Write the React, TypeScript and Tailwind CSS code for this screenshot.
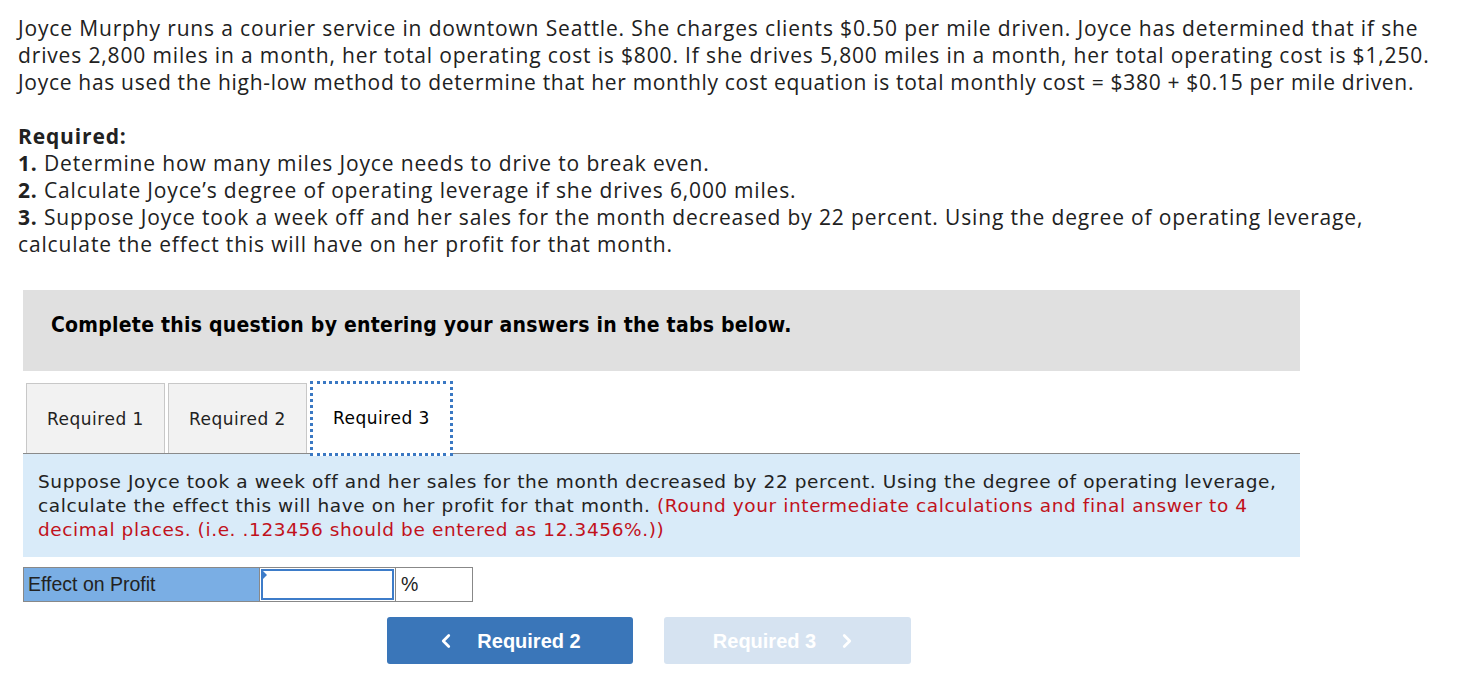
import { ChevronLeft, ChevronRight } from 'lucide-react'

const proxima = "font-['Open_Sans',_'Liberation_Sans',_sans-serif]"
const verdana = "font-['DejaVu_Sans',_'Liberation_Sans',_sans-serif]"
const arial = "font-['Liberation_Sans',_Arial,_sans-serif]"

export default function App() {
  return (
    <div className="min-h-screen bg-white text-[#212121]">
      <div className={`${proxima} whitespace-nowrap pl-[18px] pt-[15px] text-[21px] leading-[27px] tracking-[0.85px]`}>
        <p>
          Joyce Murphy runs a courier service in downtown Seattle. She charges clients $0.50 per mile driven. Joyce has determined that if she
          <br />
          drives 2,800 miles in a month, her total operating cost is $800. If she drives 5,800 miles in a month, her total operating cost is $1,250.
          <br />
          <span className="tracking-[0.7px]">
            Joyce has used the high-low method to determine that her monthly cost equation is total monthly cost = $380 + $0.15 per mile driven.
          </span>
        </p>
        <p className="mt-[27px] font-bold">Required:</p>
        <p>
          <span className="font-bold">1.</span> Determine how many miles Joyce needs to drive to break even.
        </p>
        <p>
          <span className="font-bold">2.</span> Calculate Joyce’s degree of operating leverage if she drives 6,000 miles.
        </p>
        <p>
          <span className="font-bold">3.</span> Suppose Joyce took a week off and her sales for the month decreased by 22 percent. Using the degree of operating leverage,
          <br />
          calculate the effect this will have on her profit for that month.
        </p>
      </div>

      <div className="ml-[23px] mt-[32px] w-[1277px]">
        <div className="flex h-[81px] items-center bg-[#e0e0e0] pb-[10px] pl-[28px]">
          <span className="font-['DejaVu_Sans_Condensed',_'DejaVu_Sans',_sans-serif] text-[21px] font-bold tracking-[0.25px] text-black">
            Complete this question by entering your answers in the tabs below.
          </span>
        </div>

        <div className={`${verdana} mt-[10px] flex items-end gap-[3px] pl-[3px] text-[17px] tracking-[0.5px] text-[#222]`}>
          <div className="flex h-[70px] w-[139px] items-center justify-center border border-b-0 border-[#c8c8c8] bg-[#f2f2f2] pt-[2px]">
            Required 1
          </div>
          <div className="flex h-[70px] w-[139px] items-center justify-center border border-b-0 border-[#c8c8c8] bg-[#f2f2f2] pt-[2px]">
            Required 2
          </div>
          <div className="relative z-10 -mb-[3px] flex h-[75px] w-[143px] items-center justify-center border-[3px] border-dotted border-[#3a78c3] bg-white text-black">
            Required 3
          </div>
        </div>
        <div className="h-px bg-[#8a8a8a]" />

        <div className={`${verdana} whitespace-nowrap bg-[#d9ebf9] px-[15px] pb-[15px] pt-[16px] text-[18.5px] leading-[24px] tracking-[0.6px] text-[#222]`}>
          Suppose Joyce took a week off and her sales for the month decreased by 22 percent. Using the degree of operating leverage,
          <br />
          calculate the effect this will have on her profit for that month.{' '}
          <span className="text-[#c1121c]">
            (Round your intermediate calculations and final answer to 4
            <br />
            decimal places. (i.e. .123456 should be entered as 12.3456%.))
          </span>
        </div>

        <div className={`${arial} mt-[10px] flex h-[35px] w-[450px] border border-[#888] text-[19.5px] text-[#222]`}>
          <div className="flex w-[235px] items-center bg-[#7aaee4] pl-[4px]">Effect on Profit</div>
          <div className="relative w-[136px] border-l border-[#888] p-[1px]">
            <div className="h-full w-full border-2 border-[#3d7cc9] bg-white" />
            <div className="absolute left-[1px] top-[1px] h-0 w-0 border-b-[6px] border-l-[6px] border-t-[6px] border-b-transparent border-l-[#3d7cc9] border-t-transparent" />
          </div>
          <div className="flex flex-1 items-center border-l border-[#888] bg-white pl-[5px]">%</div>
        </div>

        <div className={`${arial} mt-[15px] flex gap-[31px] pl-[364px] text-[20px] font-bold text-white`}>
          <button className="flex h-[47px] w-[246px] items-center justify-center gap-[20px] rounded-[3px] bg-[#3a76b9] pr-[4px]">
            <ChevronLeft size={22} strokeWidth={3} />
            <span>Required 2</span>
          </button>
          <button className="flex h-[47px] w-[247px] items-center justify-center gap-[20px] rounded-[3px] bg-[#d6e3f1] pr-[4px]">
            <span>Required 3</span>
            <ChevronRight size={22} strokeWidth={3} />
          </button>
        </div>
      </div>
    </div>
  )
}
